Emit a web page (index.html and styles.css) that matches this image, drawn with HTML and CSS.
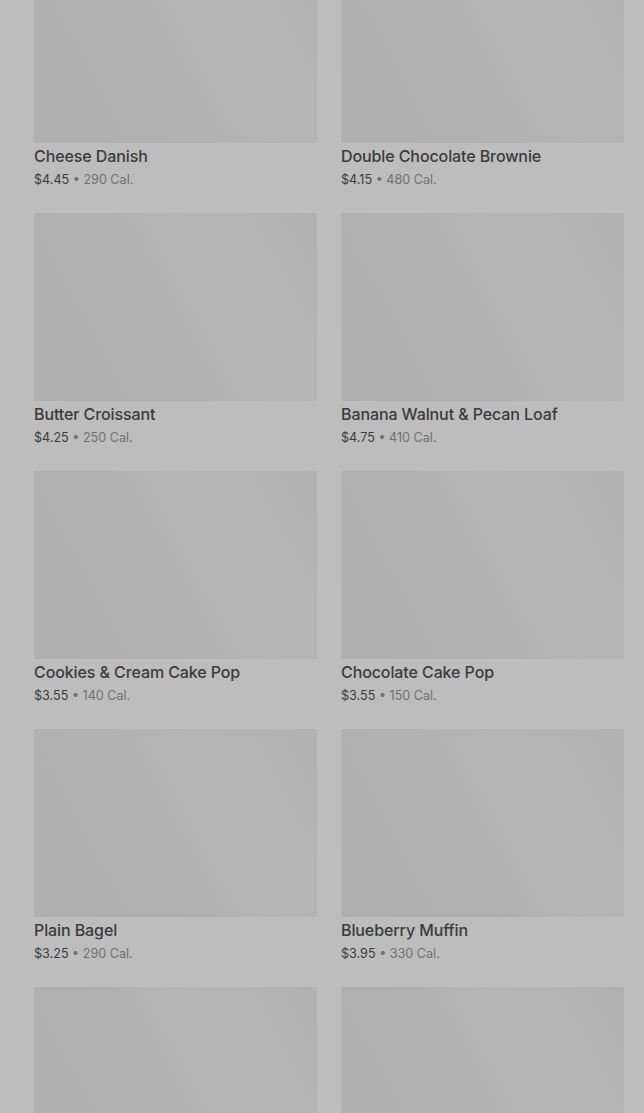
FILE: index.html
```html
<!DOCTYPE html>
<html lang="en">
<head>
    <meta charset="UTF-8">
    <meta name="viewport" content="width=device-width, initial-scale=1.0">
    <title>Bakery</title>
    <link rel="stylesheet" href="styles.css">
</head>
<body>
<div class="menu-grid">
    <div class="item">
        <div class="thumb"></div>
        <div class="name">Cheese Danish</div>
        <div class="meta"><span class="price">$4.45</span> • 290 Cal.</div>
    </div>
    <div class="item">
        <div class="thumb"></div>
        <div class="name">Double Chocolate Brownie</div>
        <div class="meta"><span class="price">$4.15</span> • 480 Cal.</div>
    </div>
    <div class="item">
        <div class="thumb"></div>
        <div class="name">Butter Croissant</div>
        <div class="meta"><span class="price">$4.25</span> • 250 Cal.</div>
    </div>
    <div class="item">
        <div class="thumb"></div>
        <div class="name">Banana Walnut &amp; Pecan Loaf</div>
        <div class="meta"><span class="price">$4.75</span> • 410 Cal.</div>
    </div>
    <div class="item">
        <div class="thumb"></div>
        <div class="name">Cookies &amp; Cream Cake Pop</div>
        <div class="meta"><span class="price">$3.55</span> • 140 Cal.</div>
    </div>
    <div class="item">
        <div class="thumb"></div>
        <div class="name">Chocolate Cake Pop</div>
        <div class="meta"><span class="price">$3.55</span> • 150 Cal.</div>
    </div>
    <div class="item">
        <div class="thumb"></div>
        <div class="name">Plain Bagel</div>
        <div class="meta"><span class="price">$3.25</span> • 290 Cal.</div>
    </div>
    <div class="item">
        <div class="thumb"></div>
        <div class="name">Blueberry Muffin</div>
        <div class="meta"><span class="price">$3.95</span> • 330 Cal.</div>
    </div>
    <div class="item">
        <div class="thumb"></div>
    </div>
    <div class="item">
        <div class="thumb"></div>
    </div>
</div>
</body>
</html>
```

FILE: styles.css
```css
html, body {
    margin: 0;
    padding: 0;
    background-color: #bdbdbd;
    overflow: hidden;
}
body {
    font-family: Inter, Roboto, "Liberation Sans", sans-serif;
    padding: 0 20px 0 34px;
}
.menu-grid {
    display: grid;
    grid-template-columns: 1fr 1fr;
    column-gap: 24px;
    margin-top: -45px;
}
.item {
    height: 258px;
}
.thumb {
    height: 188px;
    border-radius: 2px;
    background: linear-gradient(62deg, #b0b0b0 0%, #b1b1b1 45%, #b5b5b5 62%, #b3b3b3 85%, #b1b1b1 100%);
}
.name {
    margin-top: 3px;
    font-size: 16px;
    line-height: 20px;
    font-weight: 500;
    color: #3b3b3b;
    letter-spacing: -0.1px;
}
.meta {
    margin-top: 4px;
    font-size: 12.6px;
    line-height: 20px;
    color: #707070;
}
.price {
    color: #3b3b3b;
}
```
